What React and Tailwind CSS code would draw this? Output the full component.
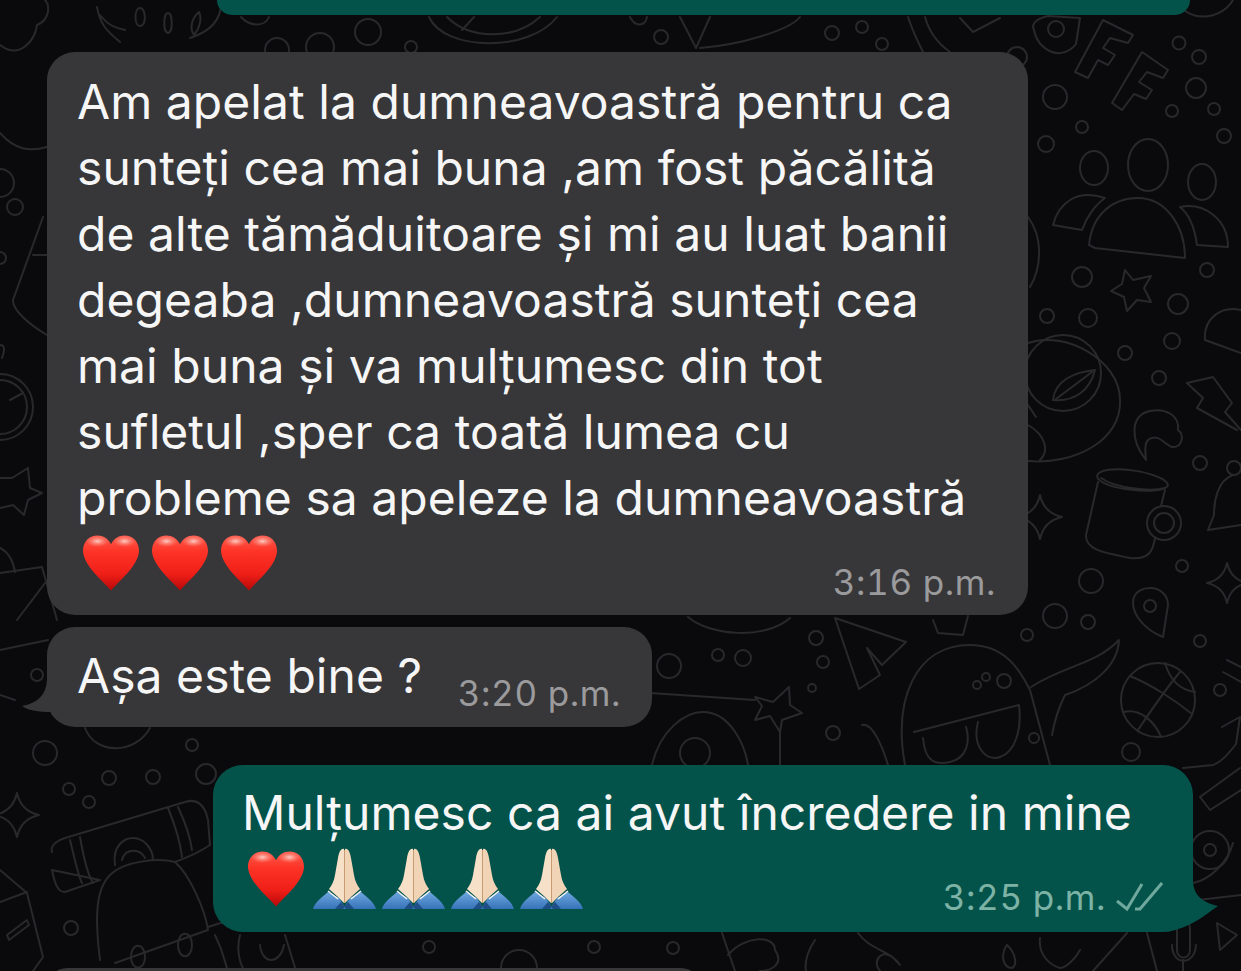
import React, { useId } from "react";

// x, y, r of the small rings in the wallpaper
const rings = [
  [1179,43,6.5],[1199,57,7],[1196,88,10],[1172,111,6],[1214,109,6],[1224,136,7],[1055,97,12],[1082,127,6],[1046,144,8],
  [1082,277,10],[1047,316,7],[1088,318,9],[1178,304,10],[1207,270,7],[1172,341,8],[1125,353,7],[1159,378,7],[1056,29,8],
  [1200,463,7],[1234,468,7],[1182,566,6],[1091,581,12],[1055,616,12],[1088,622,7],[1027,635,6],[1150,606,6],
  [669,666,12],[718,655,6],[743,658,8],[816,638,7],[823,662,6],[812,688,4],[1200,641,6],[986,677,4],[1004,681,7],[977,685,4],
  [833,733,7],[1034,738,5],[1131,752,9],[1220,690,6],[1210,850,6],[1210,850,19],[37,675,6],[45,753,12],[69,789,6],[89,802,6],[109,778,7],
  [153,777,7],[192,745,6],[206,774,10],[71,928,7],[0,183,14],[15,207,8],[0,258,6],[429,947,6],[594,947,6],[673,948,6],
  [368,32,13],[277,50,12],[320,47,14],[411,47,6],[661,37,7],[832,33,7],[862,27,6],[882,44,6],[1017,57,10],[695,753,15],
  [519,968,18],[1164,523,17],[1164,523,10],[1063,373,38],[0,407,33],[0,407,27],[1158,700,37],
];

const doodles = [
  // FF
  "M1075,72 L1103,20 L1133,35 L1128,43 L1110,38 L1103,48 L1115,55 L1108,65 L1098,60 L1088,78 Z",
  "M1112,103 L1142,52 L1168,70 L1163,78 L1147,72 L1139,82 L1152,90 L1146,99 L1134,94 L1122,110 Z",
  // camera, top right corner
  "M1034,30 C1030,22 1040,18 1048,16 L1080,18 L1076,44 C1070,52 1060,55 1052,52 C1042,48 1036,40 1034,30 Z",
  "M1177,0 C1185,22 1220,22 1233,0",
  // domes
  "M1089,245 C1092,215 1112,198 1138,198 C1165,198 1185,225 1185,258 L1095,248 Z",
  "M1053,225 C1058,205 1075,188 1105,198 C1095,205 1086,218 1082,230 Z",
  "M1180,207 C1205,202 1228,220 1228,247 L1197,245 C1195,230 1190,215 1180,207 Z",
  "M1125,270 L1133,280 L1151,276 L1144,288 L1151,302 L1137,300 L1127,311 L1124,297 L1111,291 L1122,284 Z",
  // arcs beside the big bubble and the leaf
  "M1028,217 C1045,240 1040,270 1030,287",
  "M1028,343 C1065,330 1120,360 1120,400 C1122,440 1075,465 1028,461",
  "M1053,400 C1055,380 1075,372 1095,370 C1090,390 1075,402 1053,400 Z M1056,399 L1092,372",
  "M1241,310 C1220,305 1203,320 1205,340 L1241,353",
  "M1187,383 L1213,377 L1232,403 L1225,412 L1241,430 M1187,383 L1203,398 L1197,408 L1237,430",
  // cup, croissant, bell, pin
  "M1097,476 C1100,462 1165,472 1168,485 C1166,496 1098,490 1097,476 Z M1101,478 C1115,488 1150,492 1165,488",
  "M1098,482 L1086,535 C1085,550 1105,553 1130,558 C1150,560 1153,550 1155,538 M1165,490 L1161,506",
  "M1146,460 C1130,440 1130,415 1150,411 C1165,408 1180,415 1178,430 C1185,435 1182,448 1172,447 C1165,445 1158,432 1148,440 C1143,445 1146,455 1146,460 Z",
  "M1233,475 C1218,480 1214,500 1214,515 L1208,530 L1241,525",
  "M1163,637 C1145,630 1133,615 1133,603 C1133,590 1145,588 1150,588 C1160,588 1168,595 1168,605 Z",
  "M1036,417 L1028,405 M1028,425 C1045,435 1050,450 1040,460",
  // plane, ghost, glasses, wing, ball
  "M835,618 L859,689 L880,675 L867,648 L882,665 L906,642 Z",
  "M905,765 C893,700 915,645 970,645 C1005,645 1020,670 1030,690 L1050,765",
  "M914,732 L1019,705 C1022,730 1015,752 1000,757 C985,762 972,745 978,722",
  "M923,738 C925,762 935,765 950,762 C968,758 970,740 966,727",
  "M1031,687 C1065,665 1095,665 1119,640 C1118,665 1095,685 1065,695 C1060,705 1055,718 1052,735",
  "M1130,676 C1150,684 1175,700 1192,714 M1124,712 C1140,708 1155,722 1161,737 M1165,663 C1170,680 1180,690 1195,692 M1180,672 C1165,690 1150,712 1138,730",
  // star and stick, donut
  "M789,687 L790,705 L802,713 L782,720 L780,732 L770,716 L755,720 L762,706 L755,697 L773,702 Z M780,732 L780,765",
  "M650,693 L755,700",
  "M652,765 C660,730 685,712 703,712 C730,712 745,745 748,765",
  "M862,725 C872,722 882,745 888,765",
  "M688,617 C710,636 765,640 790,618",
  "M933,620 L938,633 L963,635 L968,616",
  // right edge, lower
  "M1227,660 L1241,667 M1223,672 L1241,682",
  "M1222,727 L1240,717 L1236,744 C1230,752 1222,762 1213,765 L1183,768",
  "M1200,797 L1210,810 L1241,790 M1200,797 L1240,768",
  "M1193,883 C1210,880 1228,862 1233,843 M1198,900 L1241,895",
  "M1177,928 L1177,950 C1177,960 1190,960 1190,950 L1190,928 C1190,920 1177,920 1177,928 Z M1172,945 C1172,966 1195,966 1196,945 M1183,960 L1183,971",
  "M1217,923 L1237,935 L1220,950 Z",
  "M1147,933 L1157,971 M1127,933 L1093,971",
  // left edge
  "M0,133 C15,150 30,152 47,147",
  "M43,217 L13,300 C12,310 30,325 47,335 M33,255 L47,255",
  "M0,345 C5,345 5,350 2,358 M10,400 L23,393",
  "M28,468 L30,488 L42,493 L28,500 L24,515 L13,505 L0,508 M0,478 L12,478 L28,468",
  "M0,548 C8,552 13,560 15,572 M0,573 L42,567 L57,620 M30,603 L45,583 M17,620 L45,583 M0,650 L48,640",
  "M0,695 L15,700 M85,728 C95,755 135,755 150,728",
  "M0,45 C20,60 35,40 37,25 C50,20 50,5 45,0",
  // telescope and backpacks, bottom left
  "M52,852 C50,845 58,840 65,838 L185,802 C197,798 205,805 208,820 L210,845 C195,855 185,858 175,862 M100,880 L65,892 C58,892 55,885 52,870 Z",
  "M70,840 C75,860 78,875 82,883 M80,837 C84,860 88,875 93,883 M168,808 C175,825 180,840 182,857 M178,807 C185,822 190,835 192,850",
  "M115,865 C112,845 125,838 133,838 C145,838 153,850 153,860 M122,860 C125,848 140,848 145,858",
  "M100,960 C95,920 95,890 110,875 C125,860 160,858 175,862 C190,875 205,910 208,930 L115,963",
  "M178,945 C178,930 192,930 192,945 C192,960 178,960 178,945 Z M131,957 C131,942 145,942 145,957 C145,971 131,971 131,957 Z M208,927 L230,920",
  "M0,870 L27,893 L43,957 L33,971 M0,902 L27,892 M7,935 L27,920 L29,925 L9,940 Z",
  // below the green bubble
  "M215,935 C225,955 225,965 228,971 M240,935 C236,950 240,965 245,971 M285,935 L296,971 M260,945 C262,965 280,965 284,945",
  "M722,933 L735,971 M728,955 C745,935 775,935 775,950 C785,965 770,971 760,971",
  "M815,940 C805,955 805,965 806,971 M858,933 C870,950 890,950 900,965 M897,962 C885,945 870,960 880,971",
  "M1007,945 C1000,955 1003,968 1012,968 C1018,965 1015,952 1007,945 Z M1040,938 C1038,955 1050,965 1060,968 M1080,950 C1075,960 1065,968 1060,968",
  // top row
  "M140,8 C146,8 147,26 140,26 C134,26 134,8 140,8 Z M168,13 C173,13 173,33 168,33 C163,33 163,13 168,13 Z M194,35 C200,28 202,18 199,12 C192,18 189,28 194,35 Z",
  "M221,0 C222,15 215,30 190,38 M97,7 C100,25 108,32 120,42 M100,15 C108,25 115,28 125,30",
  "M429,17 C445,52 530,52 557,17 M447,17 C470,40 515,40 540,17 M462,30 L474,17",
  "M241,17 C250,27 265,27 269,17 M630,17 C635,27 645,27 647,17",
  "M680,17 L696,48 L710,17 M700,48 C740,45 790,30 800,17",
  "M908,17 C912,30 918,42 923,52 M925,17 C930,35 940,45 950,52 M960,18 L973,32 L1000,18",
];

const star4 = (cx, cy, r) => {
  const k = r * 0.18;
  return `M${cx},${cy - r} Q${cx + k},${cy - k} ${cx + r},${cy} Q${cx + k},${cy + k} ${cx},${cy + r} Q${cx - k},${cy + k} ${cx - r},${cy} Q${cx - k},${cy - k} ${cx},${cy - r} Z`;
};

const Wallpaper = () => (
  <svg className="absolute inset-0" width="1241" height="971" viewBox="0 0 1241 971" fill="none" stroke="#29292c" strokeWidth="2" strokeLinejoin="round" strokeLinecap="round">
    {rings.map(([x, y, r], i) => (
      <circle key={i} cx={x} cy={y} r={r} />
    ))}
    <ellipse cx="1094" cy="168" rx="14" ry="17" />
    <ellipse cx="1148" cy="165" rx="20" ry="26" />
    <ellipse cx="1202" cy="182" rx="14" ry="18" />
    <path d={star4(1040, 517, 22)} />
    <path d={star4(1227, 583, 20)} />
    <path d={star4(17, 815, 22)} />
    {doodles.map((d, i) => (
      <path key={i} d={d} />
    ))}
  </svg>
);

const Heart = ({ className = "" }) => {
  const id = useId();
  return (
    <svg width="58" height="57" viewBox="0 0 60 58" className={`shrink-0 ${className}`}>
      <defs>
        <linearGradient id={id} x1="0" y1="0" x2="0" y2="1">
          <stop offset="0" stopColor="#fd5a4c" />
          <stop offset="0.3" stopColor="#fd3326" />
          <stop offset="0.7" stopColor="#ef1f18" />
          <stop offset="1" stopColor="#b80808" />
        </linearGradient>
        <radialGradient id={`${id}h`}>
          <stop offset="0" stopColor="#ffd2c8" stopOpacity="0.95" />
          <stop offset="1" stopColor="#ff8a7c" stopOpacity="0" />
        </radialGradient>
      </defs>
      <path fill={`url(#${id})`} d="M30,57 C22,47 2,32 1,16 C1,6 8,0 16,0 C22,0 27,3 30,9 C33,3 38,0 44,0 C52,0 59,6 59,16 C58,32 38,47 30,57 Z" />
      <ellipse cx="16" cy="6" rx="12" ry="6" fill={`url(#${id}h)`} />
      <ellipse cx="44" cy="6" rx="12" ry="6" fill={`url(#${id}h)`} />
    </svg>
  );
};

const Hands = () => {
  const id = useId();
  return (
    <svg width="64" height="62" viewBox="0 0 64 62" className="shrink-0">
      <defs>
        <linearGradient id={id} x1="0" y1="0" x2="0" y2="1">
          <stop offset="0" stopColor="#6fa8e0" />
          <stop offset="1" stopColor="#3672b8" />
        </linearGradient>
      </defs>
      <path fill={`url(#${id})`} d="M0,61 C2,54 8,50 15,44 L26,50 L33,61 Z" />
      <path fill={`url(#${id})`} d="M63,61 C61,54 55,50 48,44 L37,50 L30,61 Z" />
      <path fill="#1f4f86" d="M22,61 L28,54 L33,61 Z M41,61 L35,54 L30,61 Z" />
      <path fill="#f7e0c8" d="M31,1 C28,0 26,4 25,10 L22,27 C21,33 19,37 16,41 L25,49 L31,55 Z" />
      <path fill="#f1d3b6" d="M32,1 C35,0 37,4 38,10 L41,27 C42,33 44,37 47,41 L38,49 L32,55 Z" />
      <path stroke="#c99b74" strokeWidth="1" fill="none" d="M31.5,2 L31.5,55" />
      <path stroke="#f4f4f4" strokeWidth="1.6" fill="none" d="M15,43 L25,51 M48,43 L38,51" />
    </svg>
  );
};

const Time = ({ children, className }) => (
  <span className={`text-[35px] leading-[35px] tracking-[0.6px] tabular-nums whitespace-nowrap ${className}`}>{children}</span>
);

const Ticks = () => (
  <svg width="48" height="32" viewBox="0 0 48 32" fill="none" stroke="#6fa89c" strokeWidth="3" className="shrink-0">
    <path d="M2,19 L12,27 L27,2" />
    <path d="M20,27 L25,27 L47,1" />
  </svg>
);

export default function App() {
  const bodyText = "text-[48px] leading-[66px] tracking-[0.05px] text-[#f6f6f6]";
  return (
    <div className="relative w-[1241px] h-[971px] overflow-hidden bg-[#0a0a0d] font-['Inter',sans-serif]">
      <Wallpaper />
      <div className="relative flex flex-col">
        <div className="ml-[217px] w-[973px] h-[15px] rounded-b-[28px] bg-[#04534a]" />

        <div className="mt-[37px] ml-[47px] w-[981px] h-[563px] rounded-[28px] bg-[#373739] pl-[30px] pt-[17px]">
          <p className={bodyText}>
            Am apelat la dumneavoastră pentru ca<br />
            sunteți cea mai buna ,am fost păcălită<br />
            de alte tămăduitoare și mi au luat banii<br />
            degeaba ,dumneavoastră sunteți cea<br />
            mai buna și va mulțumesc din tot<br />
            sufletul ,sper ca toată lumea cu<br />
            probleme sa apeleze la dumneavoastră
          </p>
          <div className="flex items-start justify-between pr-[32px]">
            <div className="flex gap-[11px] pl-[5px] pt-[4px]">
              <Heart />
              <Heart />
              <Heart />
            </div>
            <Time className="text-[#9b9b9d] mt-[34px]">3:16 p.m.</Time>
          </div>
        </div>

        <div className="relative mt-[12px] ml-[47px] w-[605px] h-[100px] rounded-[28px] bg-[#373739] pl-[30px] pr-[31px] pt-[16px] flex justify-between">
          <svg className="absolute left-[-27px] top-[50px]" width="40" height="40" viewBox="0 0 40 40" fill="#373739">
            <path d="M27,3 C26,18 18,26 2,29 C10,35 25,35 36,35 L36,3 Z" />
          </svg>
          <p className={`${bodyText} relative`}>Așa este bine ?</p>
          <Time className="text-[#9b9b9d] mt-[33px] relative">3:20 p.m.</Time>
        </div>

        <div className="relative mt-[38px] ml-[213px] w-[980px] h-[167px] rounded-[30px] bg-[#04534a] pl-[29px] pt-[15px]">
          <svg className="absolute left-[947px] top-[110px]" width="60" height="60" viewBox="0 0 60 60" fill="#04534a">
            <path d="M33,5 C33,18 40,27 58,31 C45,40 30,53 7,57 L7,5 Z" />
          </svg>
          <p className={`${bodyText} relative text-[#f1fbfa]`}>Mulțumesc ca ai avut încredere in mine</p>
          <div className="relative flex items-start justify-between pr-[30px]">
            <div className="flex items-center gap-[5px] pl-[5px] pt-[2px]">
              <Heart className="mr-[3px]" />
              <Hands />
              <Hands />
              <Hands />
              <Hands />
            </div>
            <div className="flex items-center gap-[9px] mt-[34px]">
              <Time className="text-[#7db3a6]">3:25 p.m.</Time>
              <Ticks />
            </div>
          </div>
        </div>

        <div className="mt-[36px] ml-[47px] w-[654px] h-[40px] rounded-[28px] bg-[#373739]" />
      </div>
    </div>
  );
}
